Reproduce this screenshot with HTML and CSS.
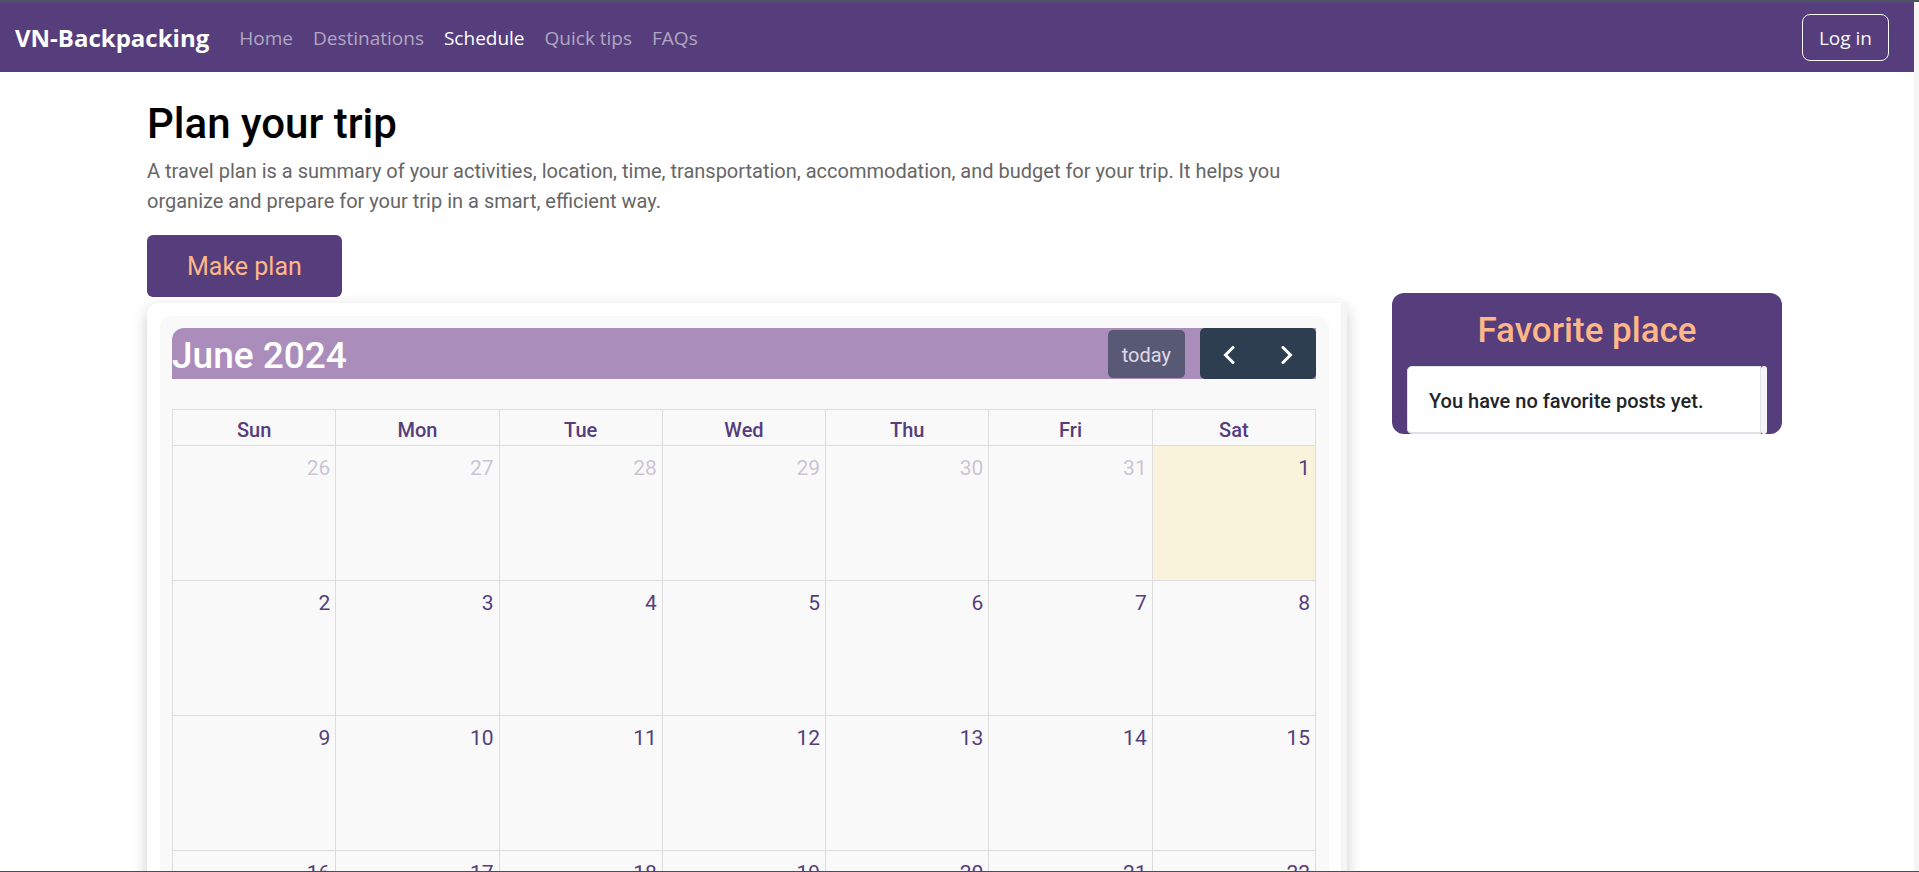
FILE: index.html
```html
<!DOCTYPE html>
<html lang="en">
<head>
<meta charset="utf-8">
<meta name="viewport" content="width=device-width, initial-scale=1">
<title>VN-Backpacking</title>
<link rel="stylesheet" href="styles.css">
</head>
<body>
<div class="page">
  <header class="navbar">
    <a class="brand" href="#">VN-Backpacking</a>
    <nav class="nav-links">
      <a href="#">Home</a>
      <a href="#">Destinations</a>
      <a class="active" href="#">Schedule</a>
      <a href="#">Quick tips</a>
      <a href="#">FAQs</a>
    </nav>
    <button class="login" type="button">Log in</button>
  </header>

  <div class="container">
    <main class="planner">
      <h1>Plan your trip</h1>
      <p class="intro">A travel plan is a summary of your activities, location, time, transportation, accommodation, and budget for your trip. It helps you organize and prepare for your trip in a smart, efficient way.</p>
      <button class="make-plan" type="button">Make plan</button>

      <section class="card">
        <div class="calendar">
          <div class="toolbar">
            <h2>June 2024</h2>
            <button class="today-btn" type="button" disabled>today</button>
            <div class="arrows">
              <button type="button" aria-label="Previous month"><svg viewBox="0 0 12 18" width="12" height="18"><path d="M10 1.5 2.5 9l7.500 7.500"/></svg></button>
              <button type="button" aria-label="Next month"><svg viewBox="0 0 12 18" width="12" height="18"><path d="M2 1.500 9.500 9 2 16.500"/></svg></button>
            </div>
          </div>
          <table class="month">
            <thead>
              <tr><th>Sun</th><th>Mon</th><th>Tue</th><th>Wed</th><th>Thu</th><th>Fri</th><th>Sat</th></tr>
            </thead>
            <tbody>
              <tr><td class="other">26</td><td class="other">27</td><td class="other">28</td><td class="other">29</td><td class="other">30</td><td class="other">31</td><td class="current">1</td></tr>
              <tr><td>2</td><td>3</td><td>4</td><td>5</td><td>6</td><td>7</td><td>8</td></tr>
              <tr><td>9</td><td>10</td><td>11</td><td>12</td><td>13</td><td>14</td><td>15</td></tr>
              <tr><td>16</td><td>17</td><td>18</td><td>19</td><td>20</td><td>21</td><td>22</td></tr>
            </tbody>
          </table>
        </div>
        <div class="track"></div>
      </section>
    </main>

    <aside class="favorites">
      <h2>Favorite place</h2>
      <div class="fav-list">
        <p>You have no favorite posts yet.</p>
        <div class="track"></div>
      </div>
    </aside>
  </div>
</div>
<div class="page-track"></div>
</body>
</html>
```
FILE: styles.css
```css
* {
  box-sizing: border-box;
}

body {
  margin: 0;
  height: 100vh;
  display: flex;
  overflow: hidden;
  border-top: 2px solid #4a555f;
  border-bottom: 1px solid #4c4a5c;
  background: #fff;
  font-family: Roboto, "Liberation Sans", sans-serif;
  font-size: 20px;
  line-height: 30px;
  color: #212529;
}

h1, h2, p {
  margin: 0;
}

button {
  margin: 0;
  border: 0;
  font: inherit;
}

.page {
  flex: 1;
  min-width: 0;
  overflow: hidden;
}

.page-track {
  width: 5px;
  background: #f5f5f5;
}

.navbar {
  display: flex;
  align-items: center;
  height: 70px;
  padding: 1px 25px 0 15px;
  background: #563d7c;
  font-family: "Open Sans", "Noto Sans", sans-serif;
  font-size: 19px;
}

.navbar a {
  text-decoration: none;
}

.brand {
  margin-right: 30px;
  font-size: 24px;
  font-weight: 700;
  color: #fff;
}

.nav-links {
  display: flex;
  flex: 1;
  gap: 20px;
}

.nav-links a {
  color: rgba(255, 255, 255, 0.55);
}

.nav-links .active {
  color: #fff;
}

.login {
  height: 47px;
  padding: 0 16px;
  border: 1px solid #f8f9fa;
  border-radius: 8px;
  background: transparent;
  color: #f8f9fa;
}

.container {
  display: flex;
  align-items: flex-start;
  gap: 45px;
  max-width: 1650px;
  margin: 0 auto;
  padding: 28px 0 0 15px;
}

.planner {
  flex: 1;
  min-width: 0;
}

.planner h1 {
  margin-bottom: 8px;
  font-size: 42px;
  font-weight: 500;
  line-height: 48px;
  color: #000;
}

.intro {
  color: #666;
}

.make-plan {
  display: block;
  margin: 19px 0 6px;
  padding: 17px 40px 15px;
  border-radius: 6px;
  background: #563d7c;
  color: #ffb787;
  font-size: 25px;
}

.card {
  display: flex;
  border-radius: 12px 6px 6px 12px;
  background: #fff;
  box-shadow: 0 5px 15px rgba(0, 0, 0, 0.2);
}

.calendar {
  flex: 1;
  min-width: 0;
  margin: 13px 12px 13px 13px;
  padding: 12px 13px 12px 12px;
  border-radius: 12px;
  background: #f9f9f9;
}

.track {
  width: 6px;
  border-radius: 4px;
  background: #f5f5f5;
}

.toolbar {
  display: flex;
  align-items: center;
  height: 51px;
  margin-bottom: 30px;
  border-radius: 12px 0 0 0;
  background: #ab8dbb;
}

.toolbar h2 {
  flex: 1;
  padding-top: 4px;
  font-size: 37px;
  font-weight: 500;
  color: #fff;
}

.today-btn {
  height: 48px;
  margin-right: 15px;
  padding: 2px 14px 0;
  border-radius: 5px;
  background: #2c3e50;
  color: #fff;
  opacity: 0.65;
}

.arrows {
  display: flex;
  height: 51px;
  overflow: hidden;
  border-radius: 5px;
}

.arrows button {
  display: grid;
  place-items: center;
  width: 58px;
  padding: 2px 0 0;
  background: #2c3e50;
}

.arrows svg {
  fill: none;
  stroke: #fff;
  stroke-width: 3;
  stroke-linecap: round;
}

.month {
  width: 100%;
  border-collapse: collapse;
  table-layout: fixed;
  color: #563d7c;
}

.month th,
.month td {
  border: 1px solid #ddd;
}

.month th {
  height: 36px;
  padding: 4px 0 0;
  font-weight: 500;
}

.month td {
  height: 135px;
  padding: 7px 5px 0;
  font-size: 21px;
  text-align: right;
  vertical-align: top;
}

.month .other {
  color: rgba(86, 61, 124, 0.3);
}

.month .current {
  background: #faf3dc;
}

.favorites {
  width: 390px;
  margin-top: 193px;
  padding: 15px 15px 0;
  border-radius: 12px;
  background: #563d7c;
}

.favorites h2 {
  margin-bottom: 12px;
  font-size: 35px;
  font-weight: 500;
  line-height: 46px;
  text-align: center;
  color: #ffb787;
}

.fav-list {
  display: flex;
}

.fav-list p {
  flex: 1;
  padding: 19px 21px 16px;
  border: 1px solid #dee2e6;
  border-bottom-width: 2px;
  border-radius: 5px 0 0 5px;
  background: #fff;
  font-weight: 500;
}
```
